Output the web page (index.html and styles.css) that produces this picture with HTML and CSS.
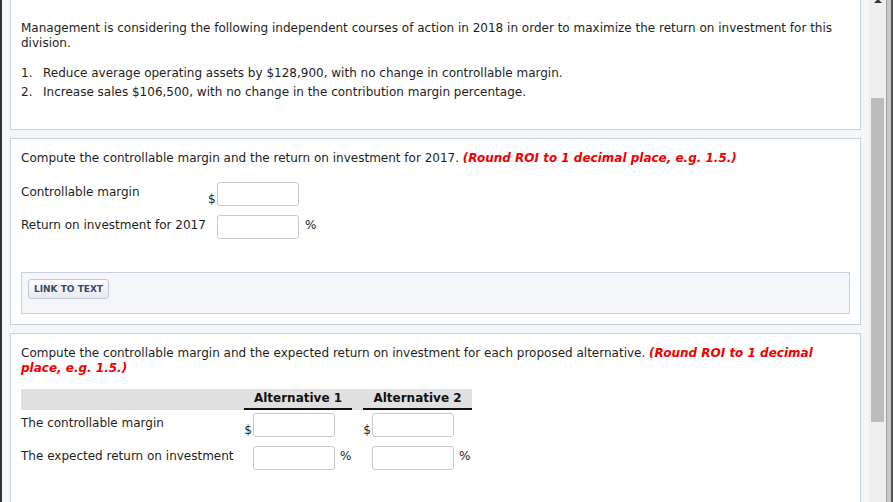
FILE: index.html
```html
<!DOCTYPE html>
<html lang="en">
<head>
<meta charset="utf-8">
<title>Controllable margin and ROI</title>
<link rel="stylesheet" href="styles.css">
</head>
<body>
<div class="window">
  <div class="content">
    <div class="panel intro">
      <p>Management is considering the following independent courses of action in 2018 in order to maximize the return on investment for this division.</p>
      <ol class="steps">
        <li>Reduce average operating assets by $128,900, with no change in controllable margin.</li>
        <li>Increase sales $106,500, with no change in the contribution margin percentage.</li>
      </ol>
    </div>

    <div class="panel">
      <p>Compute the controllable margin and the return on investment for 2017. <em class="hint">(Round ROI to 1 decimal place, e.g. 1.5.)</em></p>
      <table class="form form-a">
        <colgroup><col class="c-lbl"><col class="c-cur"><col class="c-in"><col class="c-pct"></colgroup>
        <tr>
          <td class="lbl">Controllable margin</td>
          <td class="cur">$</td>
          <td><input type="text" class="field"></td>
          <td class="pct"></td>
        </tr>
        <tr>
          <td class="lbl">Return on investment for 2017</td>
          <td class="cur"></td>
          <td><input type="text" class="field"></td>
          <td class="pct">%</td>
        </tr>
      </table>
      <div class="links">
        <button class="btn" type="button">LINK TO TEXT</button>
      </div>
    </div>

    <div class="panel last">
      <p>Compute the controllable margin and the expected return on investment for each proposed alternative. <em class="hint">(Round ROI to 1 decimal place, e.g. 1.5.)</em></p>
      <table class="form form-b">
        <colgroup>
          <col class="b-lbl"><col class="b-cur"><col class="b-in"><col class="b-pct1">
          <col class="b-gap">
          <col class="b-cur"><col class="b-in"><col class="b-pct2">
        </colgroup>
        <tr class="head">
          <th class="h-lbl"></th>
          <th class="h-alt" colspan="3">Alternative 1</th>
          <th class="h-gap"></th>
          <th class="h-alt" colspan="3">Alternative 2</th>
        </tr>
        <tr>
          <td class="lbl">The controllable margin</td>
          <td class="cur">$</td>
          <td><input type="text" class="field"></td>
          <td class="pct"></td>
          <td></td>
          <td class="cur">$</td>
          <td><input type="text" class="field"></td>
          <td class="pct"></td>
        </tr>
        <tr>
          <td class="lbl">The expected return on investment</td>
          <td class="cur"></td>
          <td><input type="text" class="field"></td>
          <td class="pct">%</td>
          <td></td>
          <td class="cur"></td>
          <td><input type="text" class="field"></td>
          <td class="pct">%</td>
        </tr>
      </table>
    </div>
  </div>

  <div class="scrollbar">
    <div class="track">
      <div class="arrow"></div>
      <div class="thumb"></div>
    </div>
    <div class="edge-line"></div>
    <div class="edge-fill"></div>
    <div class="edge-dark"></div>
  </div>
</div>
</body>
</html>
```

FILE: styles.css
```css
html, body {
  margin: 0;
  padding: 0;
  height: 100%;
  overflow: hidden;
}

body {
  font-family: "DejaVu Sans", Verdana, sans-serif;
  font-size: 12px;
  line-height: 15px;
  color: #1e1e1e;
  background: #f4f6f9;
}

.window {
  display: flex;
  height: 100vh;
}

.content {
  flex: 1;
  border-left: 2px solid #333;
  padding: 0 8px;
  background: #f4f6f9;
  overflow: hidden;
}

.panel {
  background: #fff;
  border: 1px solid #c7d0dd;
  padding: 12px 10px 10px 10px;
  margin-top: 8px;
}

.panel p {
  margin: 0;
}

.intro {
  margin-top: -1px;
  padding-top: 21px;
  padding-bottom: 29px;
}

.last {
  padding-bottom: 60px;
}

.steps {
  list-style: none;
  margin: 15px 0 0 0;
  padding: 0;
  counter-reset: step;
}

.steps li {
  counter-increment: step;
  margin-bottom: 4px;
}

.steps li:last-child {
  margin-bottom: 0;
}

.steps li::before {
  content: counter(step) ".";
  display: inline-block;
  width: 22px;
}

.hint {
  color: #f20000;
  font-weight: bold;
  font-style: italic;
}

/* forms */
.form {
  border-collapse: collapse;
  table-layout: fixed;
  margin-top: 13px;
}

.form td,
.form th {
  padding: 0;
  vertical-align: top;
}

.form .lbl {
  padding-top: 6px;
  white-space: nowrap;
}

.form .cur {
  padding-top: 13px;
  padding-right: 1px;
  text-align: right;
}

.form .pct {
  padding-top: 6px;
  padding-left: 5px;
}

.field {
  display: block;
  box-sizing: border-box;
  width: 82px;
  height: 24px;
  margin: 3px 0 6px;
  border: 1px solid #c9c9c9;
  border-radius: 3px;
  background: #fff;
  font: inherit;
}

.form-a { width: 298px; }
.form-a .c-lbl { width: 187px; }
.form-a .c-cur { width: 9px; }
.form-a .c-in  { width: 82px; }
.form-a .c-pct { width: 20px; }
.form-a .cur { padding-right: 2px; }
.form-a .pct { padding-left: 6px; }

.form-b { width: 451px; }
.form-b .b-lbl  { width: 223px; }
.form-b .b-cur  { width: 9px; }
.form-b .b-in   { width: 82px; }
.form-b .b-pct1 { width: 17px; }
.form-b .b-pct2 { width: 18px; }
.form-b .b-gap  { width: 11px; }

.head th {
  background: #e0e0e0;
  padding: 2px 0 2px;
  font-weight: bold;
  text-align: center;
  color: #111;
}

.head .h-lbl,
.head .h-gap {
  border-bottom: 2px solid #e0e0e0;
}

.head .h-alt {
  border-bottom: 2px solid #111;
}

/* link box */
.links {
  margin-top: 27px;
  border: 1px solid #c7d0dd;
  background: #f4f6f9;
  padding: 6px 6px 14px;
}

.btn {
  display: block;
  box-sizing: border-box;
  height: 20px;
  width: 81px;
  padding: 0;
  border: 1px solid #c3c9d2;
  border-radius: 3px;
  background: linear-gradient(#fbfcfd, #e7eaef);
  color: #3b4863;
  font-family: "DejaVu Sans", Verdana, sans-serif;
  font-size: 9px;
  font-weight: bold;
  line-height: 18px;
  text-align: center;
}

/* scrollbar */
.scrollbar {
  display: flex;
  width: 24px;
  background: #eeeeee;
}

.track {
  width: 17px;
  display: flex;
  flex-direction: column;
  align-items: center;
  background: #efefef;
}

.arrow {
  width: 0;
  height: 0;
  margin-top: -1px;
  border-left: 4px solid transparent;
  border-right: 4px solid transparent;
  border-bottom: 4px solid #333;
}

.thumb {
  width: 13px;
  height: 324px;
  margin-top: 95px;
  background: #bcbcbc;
}

.edge-line {
  width: 1px;
  background: #a0a0a0;
}

.edge-fill {
  width: 4px;
  background: #c8c8c8;
}

.edge-dark {
  width: 2px;
  background: #555;
}
```
